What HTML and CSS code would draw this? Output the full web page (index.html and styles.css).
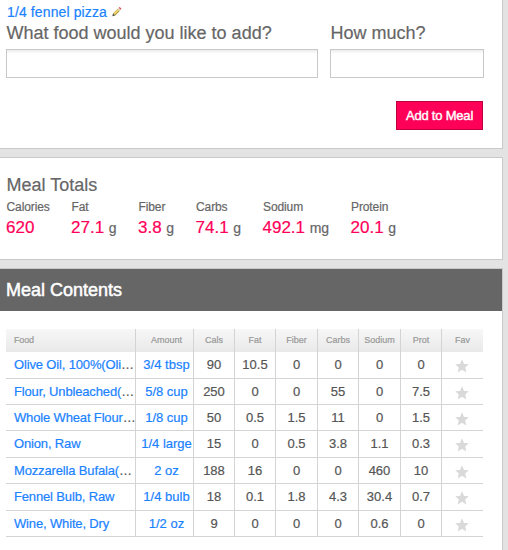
FILE: index.html
```html
<!DOCTYPE html>
<html lang="en">
<head>
  <meta charset="UTF-8" />
  <meta name="viewport" content="width=device-width, initial-scale=1" />
  <title>Meal</title>
  <link rel="stylesheet" href="styles.css">
</head>
<body>
  <svg class="defs" width="0" height="0">
    <symbol id="star" viewBox="0 0 14 14">
      <path d="M7 0.3 L9 4.9 L13.8 5.3 L10.2 8.5 L11.3 13.4 L7 10.8 L2.7 13.4 L3.8 8.5 L0.2 5.3 L5 4.9 Z" />
    </symbol>
  </svg>

  <div class="panel add-food">
    <div class="meal-name">
      <a href="#">1/4 fennel pizza</a>
      <svg class="pencil" width="10" height="10" viewBox="0 0 10 10">
        <path d="M2 7.6 L6.8 2.8" stroke="#a98f3c" stroke-width="3" />
        <path d="M2 7.2 L6.8 2.4" stroke="#f0dc72" stroke-width="1.7" />
        <path d="M6.7 2.6 L7.7 1.6" stroke="#d8d8d8" stroke-width="3" />
        <path d="M7.6 1.8 L8.6 0.9" stroke="#e0525a" stroke-width="2.6" />
        <path d="M0.3 9.2 L1 6.6 L3 8.6 Z" fill="#444" />
      </svg>
    </div>
    <form class="add-form">
      <div class="field">
        <label for="food">What food would you like to add?</label>
        <input type="text" id="food">
      </div>
      <div class="field">
        <label for="qty">How much?</label>
        <input type="text" id="qty">
      </div>
    </form>
    <button type="button" class="add-button">Add to Meal</button>
  </div>

  <div class="panel totals">
    <h2>Meal Totals</h2>
    <div class="total-list">
      <div class="total"><div class="label">Calories</div><span class="value">620</span></div>
      <div class="total"><div class="label">Fat</div><span class="value">27.1</span> <span class="unit">g</span></div>
      <div class="total"><div class="label">Fiber</div><span class="value">3.8</span> <span class="unit">g</span></div>
      <div class="total"><div class="label">Carbs</div><span class="value">74.1</span> <span class="unit">g</span></div>
      <div class="total"><div class="label">Sodium</div><span class="value">492.1</span> <span class="unit">mg</span></div>
      <div class="total"><div class="label">Protein</div><span class="value">20.1</span> <span class="unit">g</span></div>
    </div>
  </div>

  <div class="panel contents">
    <h2>Meal Contents</h2>
    <div class="foods">
      <div class="row head">
        <div class="name">Food</div><div>Amount</div><div>Cals</div><div>Fat</div><div>Fiber</div><div>Carbs</div><div>Sodium</div><div>Prot</div><div>Fav</div>
      </div>
      <div class="row">
        <div class="name"><a href="#">Olive Oil, 100%(Oli</a>…</div><div><a href="#">3/4 tbsp</a></div><div>90</div><div>10.5</div><div>0</div><div>0</div><div>0</div><div>0</div><div><svg class="star"><use href="#star" /></svg></div>
      </div>
      <div class="row">
        <div class="name"><a href="#">Flour, Unbleached(</a>…</div><div><a href="#">5/8 cup</a></div><div>250</div><div>0</div><div>0</div><div>55</div><div>0</div><div>7.5</div><div><svg class="star"><use href="#star" /></svg></div>
      </div>
      <div class="row">
        <div class="name"><a href="#">Whole Wheat Flour</a>…</div><div><a href="#">1/8 cup</a></div><div>50</div><div>0.5</div><div>1.5</div><div>11</div><div>0</div><div>1.5</div><div><svg class="star"><use href="#star" /></svg></div>
      </div>
      <div class="row">
        <div class="name"><a href="#">Onion, Raw</a></div><div><a href="#">1/4 large</a></div><div>15</div><div>0</div><div>0.5</div><div>3.8</div><div>1.1</div><div>0.3</div><div><svg class="star"><use href="#star" /></svg></div>
      </div>
      <div class="row">
        <div class="name"><a href="#">Mozzarella Bufala(</a>…</div><div><a href="#">2 oz</a></div><div>188</div><div>16</div><div>0</div><div>0</div><div>460</div><div>10</div><div><svg class="star"><use href="#star" /></svg></div>
      </div>
      <div class="row">
        <div class="name"><a href="#">Fennel Bulb, Raw</a></div><div><a href="#">1/4 bulb</a></div><div>18</div><div>0.1</div><div>1.8</div><div>4.3</div><div>30.4</div><div>0.7</div><div><svg class="star"><use href="#star" /></svg></div>
      </div>
      <div class="row">
        <div class="name"><a href="#">Wine, White, Dry</a></div><div><a href="#">1/2 oz</a></div><div>9</div><div>0</div><div>0</div><div>0</div><div>0.6</div><div>0</div><div><svg class="star"><use href="#star" /></svg></div>
      </div>
    </div>
  </div>
</body>
</html>
```
FILE: styles.css
```css
* {
  box-sizing: border-box;
}

body {
  margin: 0;
  height: 550px;
  overflow: hidden;
  display: flex;
  flex-direction: column;
  gap: 8px;
  background: #e2e3e2;
  color: #666;
  font-family: "Liberation Sans", Arial, sans-serif;
  font-size: 13px;
  -webkit-text-stroke: 0.2px;
}

a {
  color: #1a82ff;
  text-decoration: none;
}

h2 {
  margin: 0;
  font-size: 18px;
  font-weight: normal;
}

.defs {
  display: none;
}

.panel {
  width: 503px;
  background: #fff;
  border: 1px solid #c8c9c9;
  border-left: none;
}

.add-food {
  height: 149px;
  border-top: none;
  padding: 4px 19px 0 6px;
}

.meal-name {
  height: 18px;
  padding-left: 1px;
  line-height: 17px;
  font-size: 14px;
  letter-spacing: 0.12px;
}

.pencil {
  margin-left: 1px;
}

.add-form {
  display: grid;
  grid-template-columns: 312px 154px;
  gap: 12px;
}

.field label {
  display: block;
  height: 27px;
  padding-left: 0.5px;
  line-height: 22px;
  font-size: 18px;
  white-space: nowrap;
}

.field input {
  display: block;
  width: 100%;
  height: 29px;
  border: 1px solid #c8c8c8;
  background: linear-gradient(#ececec, #fff 4px);
}

.add-button {
  display: block;
  width: 87px;
  height: 29px;
  margin: 23px 0 0 auto;
  padding: 0;
  border: 1px solid #c0003c;
  background: #ff0059;
  color: #fff;
  font-family: inherit;
  font-size: 13px;
  letter-spacing: -0.2px;
  -webkit-text-stroke: 0.4px #fff;
}

.totals {
  height: 103px;
  padding: 16px 0 0 6px;
}

.totals h2 {
  height: 23px;
  padding-left: 0.5px;
  line-height: 22px;
}

.total-list {
  display: grid;
  grid-template-columns: 65px 67px 57.5px 67px 88px 60px;
}

.label {
  height: 21px;
  padding-left: 0.5px;
  line-height: 20px;
  font-size: 12px;
  letter-spacing: -0.1px;
}

.value {
  line-height: 20px;
  font-size: 17px;
  color: #ff0059;
}

.unit {
  margin-left: 1px;
  font-size: 14px;
}

.contents {
  flex: 1;
  border-bottom: none;
}

.contents h2 {
  height: 42px;
  padding-left: 6px;
  line-height: 42px;
  background: #666;
  color: #fff;
  -webkit-text-stroke: 0.5px #fff;
}

.foods {
  padding: 18px 0 0 6px;
}

.row {
  display: grid;
  grid-template-columns: 130px 58px 41px 41px 42px 41px 42px 41px 41px;
  height: 26.4px;
  line-height: 25px;
  text-align: center;
  color: #555;
  border-bottom: 1px solid #d4d4d4;
  width: 477px;
}

.row > div {
  border-right: 1px solid #d4d4d4;
  white-space: nowrap;
}

.row > div:last-child {
  border-right: none;
}

.row .name {
  padding-left: 8px;
  text-align: left;
  letter-spacing: -0.15px;
}

.row > div:nth-child(2) {
  padding-left: 4px;
}

.head {
  height: 23.2px;
  line-height: 22px;
  font-size: 9px;
  color: #999;
  background: linear-gradient(#f7f7f7, #e9e9e9);
  border-bottom: none;
}

.star {
  display: block;
  width: 14px;
  height: 14px;
  margin: 7px 0 0 13px;
  fill: #d9d9d9;
}
```
